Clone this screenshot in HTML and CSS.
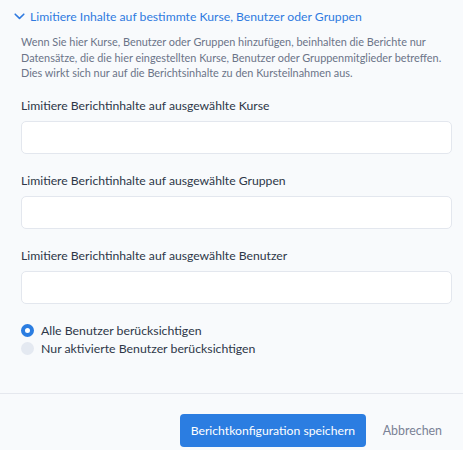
FILE: index.html
```html
<!DOCTYPE html>
<html lang="de">
<head>
<meta charset="utf-8">
<link rel="stylesheet" href="styles.css">
</head>
<body>
<div class="page">
  <section class="panel">
    <button class="toggle" type="button">
      <svg class="chev" width="11" height="7" viewBox="0 0 11 7"><path d="M1.2 1.2 L5.5 5.4 L9.8 1.2" fill="none" stroke="#2f7ae0" stroke-width="1.6" stroke-linecap="round" stroke-linejoin="round"/></svg>
      <span>Limitiere Inhalte auf bestimmte Kurse, Benutzer oder Gruppen</span>
    </button>
    <p class="desc">Wenn Sie hier Kurse, Benutzer oder Gruppen hinzufügen, beinhalten die Berichte nur Datensätze, die die hier eingestellten Kurse, Benutzer oder Gruppenmitglieder betreffen. Dies wirkt sich nur auf die Berichtsinhalte zu den Kursteilnahmen aus.</p>
    <div class="field">
      <label class="label">Limitiere Berichtinhalte auf ausgewählte Kurse</label>
      <div class="input"></div>
    </div>
    <div class="field">
      <label class="label">Limitiere Berichtinhalte auf ausgewählte Gruppen</label>
      <div class="input"></div>
    </div>
    <div class="field">
      <label class="label">Limitiere Berichtinhalte auf ausgewählte Benutzer</label>
      <div class="input"></div>
    </div>
    <div class="radios">
      <label class="radio"><span class="dot on"></span>Alle Benutzer berücksichtigen</label>
      <label class="radio"><span class="dot"></span>Nur aktivierte Benutzer berücksichtigen</label>
    </div>
  </section>
  <footer class="footer">
    <button class="primary" type="button">Berichtkonfiguration speichern</button>
    <button class="cancel" type="button">Abbrechen</button>
  </footer>
</div>
</body>
</html>
```
FILE: styles.css
```css
html, body {
  margin: 0;
  padding: 0;
  background: #f8fafc;
}
body {
  font-family: Lato, "Open Sans", sans-serif;
  color: #2d3748;
}
.page {
  width: 463px;
  height: 450px;
  overflow: hidden;
}
.panel {
  padding: 6px 11px 0 21px;
  height: 386px;
  box-sizing: border-box;
}
.toggle {
  display: flex;
  align-items: center;
  gap: 5px;
  margin: 0 0 0 -7px;
  padding: 0;
  border: 0;
  background: none;
  font: inherit;
  font-size: 12.2px;
  color: #2f7ae0;
  height: 20px;
  cursor: pointer;
}
.chev { display: block; }
.desc {
  margin: 8px 0 0 0;
  font-size: 10.9px;
  line-height: 15.5px;
  color: #6b7488;
}
.field {
  margin-top: 16px;
}
.field + .field { margin-top: 18px; }
.label {
  display: block;
  font-size: 12.2px;
  line-height: 18px;
  color: #2d3748;
}
.input {
  margin-top: 6px;
  height: 31px;
  background: #fff;
  border: 1px solid #e3e7ee;
  border-radius: 5px;
}
.radios {
  margin-top: 18px;
  display: flex;
  flex-direction: column;
  gap: 1px;
}
.radio {
  display: flex;
  align-items: center;
  gap: 7px;
  font-size: 12.3px;
  line-height: 17px;
  color: #2d3748;
}
.dot {
  width: 13px;
  height: 13px;
  border-radius: 50%;
  background: #e4e9f1;
  box-sizing: border-box;
}
.dot.on {
  background: #fff;
  border: 4px solid #2b7de1;
}
.footer {
  border-top: 1px solid #e5e8ee;
  margin-top: 7px;
  padding: 20px 21px 0 0;
  display: flex;
  justify-content: flex-end;
  align-items: center;
  gap: 17px;
}
.primary {
  height: 33px;
  padding: 0 10.5px;
  background: #2b7de1;
  color: #fff;
  border: 0;
  border-radius: 4px;
  font: inherit;
  font-size: 12.2px;
}
.cancel {
  border: 0;
  background: none;
  padding: 0;
  font: inherit;
  font-size: 12.4px;
  color: #7a8296;
}
```
